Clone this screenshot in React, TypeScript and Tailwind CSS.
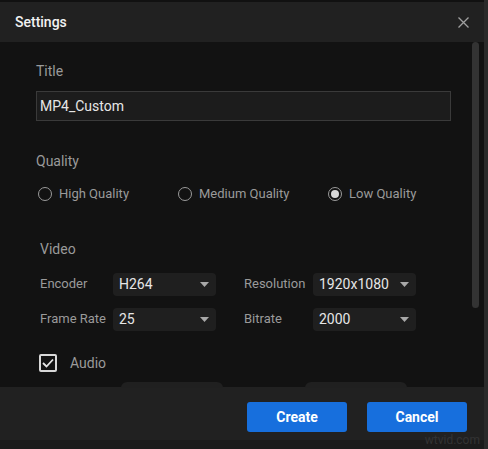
import React from 'react';

function Select({ value, width = 'w-[103px]' }: { value: string; width?: string }) {
  return (
    <div className={`flex h-[23px] ${width} items-center justify-between rounded-[4px] bg-[#1f1f1f] pl-[6px] pr-[7px] text-[14px] text-[#e6e6e6]`}>
      <span>{value}</span>
      <svg width="9" height="5" viewBox="0 0 9 5">
        <path d="M0 0 L9 0 L4.5 5 Z" fill="#a8a8a8" />
      </svg>
    </div>
  );
}

function Radio({ label, checked }: { label: string; checked?: boolean }) {
  return (
    <div className="flex items-center gap-[7px]">
      <span className="flex h-[14px] w-[14px] items-center justify-center rounded-full border border-[#9a9a9a]">
        {checked && <span className="h-[8px] w-[8px] rounded-full bg-[#d8d8d8]" />}
      </span>
      <span className="text-[13px] text-[#9a9a9a]">{label}</span>
    </div>
  );
}

export default function App() {
  return (
    <div className="relative h-[449px] w-[488px] overflow-hidden bg-[#1b1b1b] font-['Roboto','Liberation_Sans',sans-serif]">
      <div className="flex h-[440px] w-[484px] flex-col border-t-2 border-[#111]">
        {/* header */}
        <div className="flex h-[40px] items-center justify-between bg-[#212121] pl-[15px] pr-[15px]">
          <span className="text-[14px] font-medium text-[#f2f2f2]">Settings</span>
          <svg width="11" height="11" viewBox="0 0 11 11">
            <path d="M0.5 0.5 L10.5 10.5 M10.5 0.5 L0.5 10.5" stroke="#a0a0a0" strokeWidth="1.3" />
          </svg>
        </div>

        {/* body */}
        <div className="relative flex-1 bg-[#121212]">
          <div className="absolute right-[5px] top-[0px] h-[266px] w-[7px] rounded-full bg-[#333]" />
          <div className="flex flex-col pl-[36px] pt-[19px]">
            <div className="text-[14px] text-[#9a9a9a]">Title</div>
            <div className="mt-[9px] flex h-[30px] w-[415px] items-center border border-[#3a3a3a] bg-[#1c1c1c] px-[3px] text-[14px] text-[#e6e6e6]">
              MP4_Custom
            </div>

            <div className="mt-[30px] text-[14px] text-[#9a9a9a]">Quality</div>
            <div className="mt-[12px] flex items-center">
              <div className="w-[142px] pl-[2px]"><Radio label="High Quality" /></div>
              <div className="w-[150px]"><Radio label="Medium Quality" /></div>
              <Radio label="Low Quality" checked />
            </div>

            <div className="mt-[35px] pl-[4px] text-[14px] text-[#9a9a9a]">Video</div>
            <div className="mt-[13px] flex flex-col gap-[12px] pl-[4px]">
              <div className="flex items-center">
                <span className="w-[73px] text-[13px] text-[#9a9a9a]">Encoder</span>
                <Select value="H264" />
                <span className="ml-[28px] w-[69px] text-[13px] text-[#9a9a9a]">Resolution</span>
                <Select value="1920x1080" />
              </div>
              <div className="flex items-center">
                <span className="w-[73px] text-[13px] text-[#9a9a9a]">Frame Rate</span>
                <Select value="25" />
                <span className="ml-[28px] w-[69px] text-[13px] text-[#9a9a9a]">Bitrate</span>
                <Select value="2000" />
              </div>
            </div>

            <div className="mt-[22px] flex items-center gap-[13px] pl-[3px]">
              <span className="flex h-[18px] w-[18px] items-center justify-center rounded-[2px] border-2 border-[#d8d8d8]">
                <svg width="12" height="10" viewBox="0 0 12 10">
                  <path d="M1 5 L4.5 8.5 L11 1.5" stroke="#e6e6e6" strokeWidth="1.8" fill="none" />
                </svg>
              </span>
              <span className="text-[14px] text-[#9a9a9a]">Audio</span>
            </div>
          </div>
        </div>

        {/* footer */}
        <div className="relative flex h-[53px] items-start justify-end gap-[20px] bg-[#212121] pr-[17px] pt-[15px]">
          <div className="absolute left-[121px] top-[-5px] h-[6px] w-[102px] rounded-t-[6px] bg-[#202020]" />
          <div className="absolute left-[305px] top-[-5px] h-[6px] w-[102px] rounded-t-[6px] bg-[#202020]" />
          <button className="h-[30px] w-[100px] rounded-[3px] bg-[#176fdd] text-[14px] font-bold text-white">Create</button>
          <button className="h-[30px] w-[100px] rounded-[3px] bg-[#176fdd] text-[14px] font-bold text-white">Cancel</button>
        </div>
      </div>
      <div className="absolute right-0 top-0 h-full w-[4px] bg-[#2a2a2a]" />
      <div className="absolute bottom-[0px] right-[8px] text-[12px] text-[#333]">wtvid.com</div>
    </div>
  );
}
